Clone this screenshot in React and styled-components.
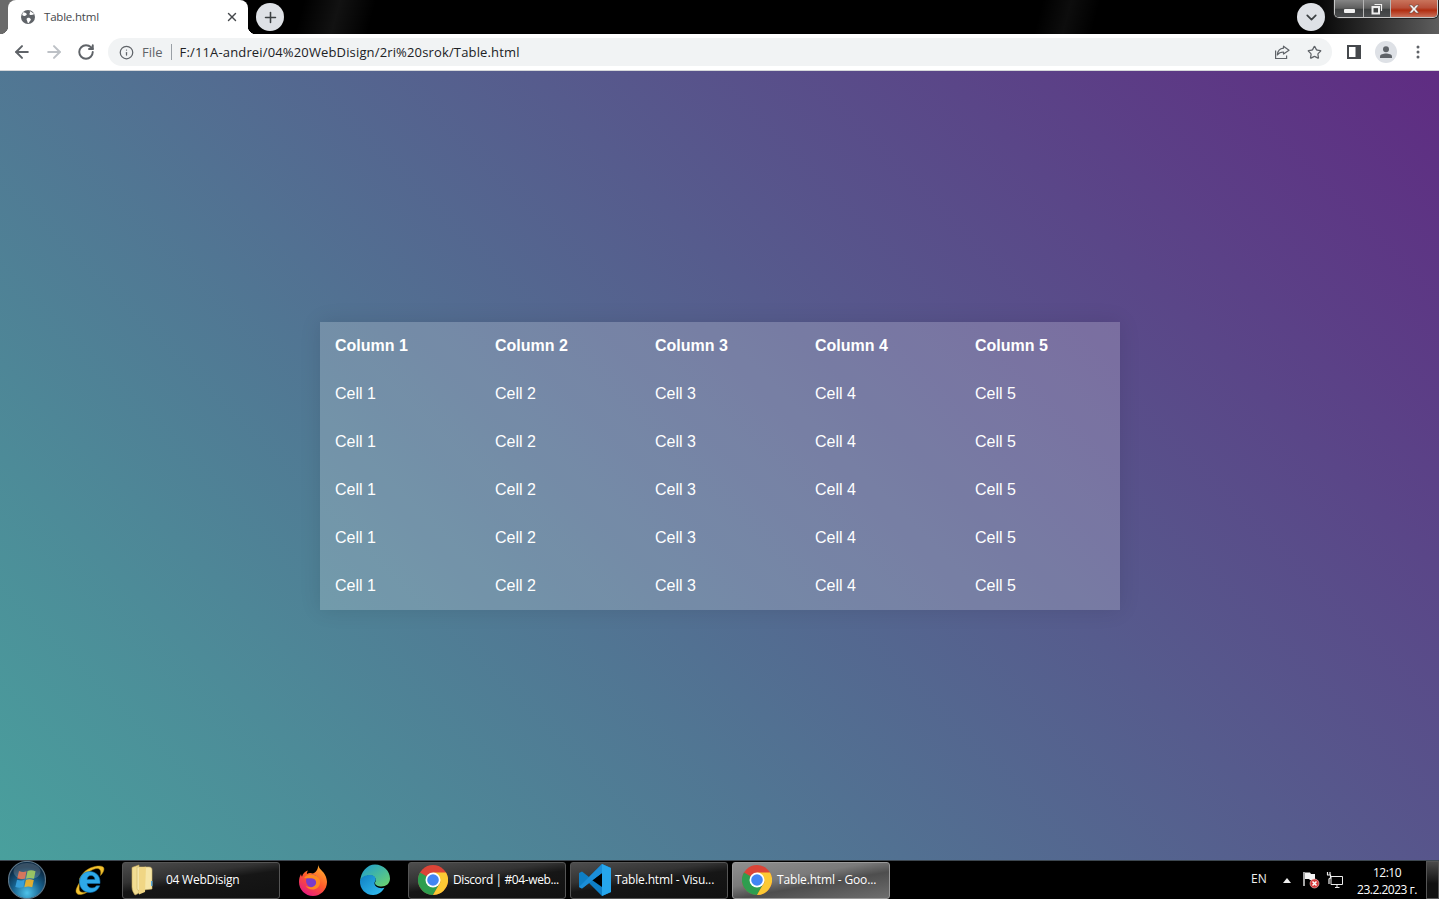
import React from 'react';
import styled, { createGlobalStyle } from 'styled-components';
import { ArrowLeft, ArrowRight, RotateCw, Info, Star, Plus, X, ChevronDown } from 'lucide-react';

const GlobalStyle = createGlobalStyle`
  html, body { margin: 0; padding: 0; height: 100%; overflow: hidden; }
  body { font-family: "Liberation Sans", Arial, sans-serif; }
`

const Screen = styled.div`
  width: 1439px;
  height: 899px;
  display: flex;
  flex-direction: column;
  overflow: hidden;
`

/* chrome title bar */
const TitleBar = styled.div`
  height: 34px;
  flex: none;
  display: flex;
  align-items: flex-start;
  padding-left: 8px;
  position: relative;
  background:
    linear-gradient(to right, #6a6a6a 16px, transparent 16px),
    linear-gradient(to right, transparent 91%, rgba(110,110,110,.85) 100%),
    linear-gradient(105deg, transparent 21%, rgba(255,255,255,.07) 23.500%, transparent 26%, transparent 72%, rgba(255,255,255,.05) 74%, transparent 76%),
    #000;
`
const Tab = styled.div`
  width: 240px;
  height: 34px;
  background: #fff;
  border-radius: 8px 8px 0 0;
  display: flex;
  align-items: center;
  padding: 0 9px 0 12px;
  box-sizing: border-box;
  position: relative;
  font: 11.5px "Open Sans", sans-serif;
  color: #45484c;
  &::before {
    content: '';
    position: absolute;
    left: -8px;
    top: 0;
    width: 8px;
    height: 34px;
    background:
      linear-gradient(#6a6a6a, #6a6a6a) top / 100% 26px no-repeat,
      radial-gradient(circle at 0 0, #6a6a6a 8px, #fff 8.500px) bottom / 100% 8px no-repeat;
  }
  &::after {
    content: '';
    position: absolute;
    left: 100%;
    bottom: 0;
    width: 8px;
    height: 8px;
    background: radial-gradient(circle at 100% 0, transparent 8px, #fff 8.500px);
  }
`
const TabTitle = styled.span`
  flex: 1;
  margin: 0 0 2px 8px;
  letter-spacing: -0.2px;
`
const TabClose = styled(X)`
  color: #45484c;
`
const NewTab = styled.div`
  width: 28px;
  height: 28px;
  margin: 3px 0 0 8px;
  border-radius: 50%;
  background: #dee1e6;
  color: #3c4043;
  display: flex;
  align-items: center;
  justify-content: center;
`
const TabSearch = styled(NewTab)`
  margin: 3px 0 0 auto;
`
const WindowControls = styled.div`
  width: 104px;
  height: 18px;
  margin: 0 1px 0 9px;
  display: flex;
  border: 1px solid #c8c8c8;
  border-top: 0;
  border-radius: 0 0 5px 5px;
  box-sizing: border-box;
  overflow: hidden;
  box-shadow: 0 0 0 1px #222;
`
const WinButton = styled.div`
  width: ${p => p.$w}px;
  flex: none;
  display: flex;
  align-items: center;
  justify-content: center;
  box-sizing: border-box;
  border-right: ${p => (p.$close ? '0' : '1px solid #b5b5b5')};
  background: ${p => (p.$close
    ? 'linear-gradient(#c9745c 0, #b8503a 45%, #b02d10 60%, #c9705a 100%)'
    : 'linear-gradient(#858585 0, #5e5e5e 48%, #3e4041 55%, #4c4e50 100%)')};
`
const MinGlyph = styled.div`
  width: 11px;
  height: 4px;
  margin-top: 5px;
  background: #f2f2f2;
  border-radius: 1px;
`

/* chrome toolbar */
const Toolbar = styled.div`
  height: 36px;
  flex: none;
  background: #fff;
  border-bottom: 1px solid #d5d7da;
  display: flex;
  align-items: center;
  padding: 0 5px 0 6px;
`
const NavButton = styled.div`
  width: 32px;
  height: 28px;
  flex: none;
  display: flex;
  align-items: center;
  justify-content: center;
  color: ${p => (p.$disabled ? '#bdc1c6' : '#5f6368')};
`
const Omnibox = styled.div`
  flex: 1;
  height: 28px;
  margin: 0 6px;
  border-radius: 14px;
  background: #f1f3f4;
  display: flex;
  align-items: center;
  padding: 0 2px 0 11px;
  font: 13px "Open Sans", sans-serif;
`
const SecureLabel = styled.span`
  color: #5f6368;
  margin-left: 8px;
`
const Divider = styled.div`
  width: 1px;
  height: 16px;
  background: #9aa0a6;
  margin: 0 8px;
`
const Url = styled.span`
  flex: 1;
  color: #202124;
  letter-spacing: 0.15px;
`
const OmniIcon = styled.div`
  width: 32px;
  display: flex;
  justify-content: center;
  color: #5f6368;
`
const Avatar = styled.div`
  width: 22px;
  height: 22px;
  border-radius: 50%;
  background: #dee1e6;
  display: flex;
  align-items: center;
  justify-content: center;
`

/* the page itself */
const Page = styled.main`
  flex: 1;
  min-height: 0;
  display: flex;
  align-items: center;
  justify-content: center;
  padding: 1px 0 0 1px;
  background: linear-gradient(45deg, #49a09d, #5f2c82);
`
const Table = styled.table`
  width: 800px;
  border-collapse: collapse;
  table-layout: fixed;
  overflow: hidden;
  box-shadow: 0 0 20px rgba(0,0,0,0.1);
`
const Th = styled.th`
  padding: 15px;
  line-height: 18px;
  font-size: 16px;
  text-align: left;
  color: #fff;
  background: rgba(255,255,255,0.2);
`
const Td = styled.td`
  padding: 15px;
  line-height: 18px;
  font-size: 16px;
  color: #fff;
  background: rgba(255,255,255,0.2);
`

/* windows taskbar */
const Taskbar = styled.div`
  height: 39px;
  flex: none;
  background: #000;
  border-top: 1px solid #3d4750;
  box-sizing: border-box;
  display: flex;
  align-items: center;
  color: #fff;
  font: 12px "Open Sans", sans-serif;
`
const StartSlot = styled.div`
  width: 58px;
  padding-left: 8px;
  box-sizing: border-box;
  flex: none;
  display: flex;
`
const Pinned = styled.div`
  width: 62px;
  flex: none;
  display: flex;
  justify-content: center;
`
const TaskButton = styled.div`
  width: 158px;
  height: 37px;
  margin: 0 2px;
  flex: none;
  box-sizing: border-box;
  display: flex;
  align-items: center;
  gap: ${p => p.$gap}px;
  padding-left: ${p => p.$pad}px;
  border: 1px solid ${p => (p.$active ? '#9a9a9a' : '#555')};
  border-radius: 3px;
  white-space: nowrap;
  letter-spacing: ${p => p.$spacing}px;
  background: ${p => (p.$active
    ? 'linear-gradient(170deg, #8f8f8f 0, #7a7a7a 38%, #4e4e4e 58%, #6e6e6e 100%)'
    : 'linear-gradient(172deg, #4d4d4d 0, #333 35%, #161616 52%, #111 100%)')};
`
const TaskLabel = styled.span`
  margin-bottom: 2px;
`
const Tray = styled.div`
  margin-left: auto;
  height: 100%;
  display: flex;
  align-items: center;
`
const Lang = styled.span`
  width: 16px;
  margin: -3px 8px 0 0;
  font-size: 12px;
  color: #f0f0f0;
`
const TrayIcon = styled.div`
  width: 24px;
  flex: none;
  display: flex;
  justify-content: center;
`
const Clock = styled.div`
  width: 64px;
  margin-left: 8px;
  padding-top: 1px;
  text-align: center;
  font-size: 12px;
  line-height: 17px;
  letter-spacing: -0.5px;
  white-space: nowrap;
`
const ShowDesktop = styled.div`
  width: 13px;
  height: 100%;
  margin-left: 7px;
  box-sizing: border-box;
  border: 1px solid #555;
  background: linear-gradient(#4a4a4a, #111 60%);
`

const Globe = () => (
  <svg width="16" height="16" viewBox="0 0 16 16">
    <circle cx="8" cy="8" r="7" fill="#5f6368" />
    <path d="M3 3.200c2 .2 3 .8 3.600 1.600.6 1-.6 1.600-1.400 2-.8.5-1.800.2-3-.8zM9 1.400c1.200.7 1.300 1.800.7 2.800-.6.8-.3 1.500.8 1.700 1 .2 2.500-.1 4-.9M7.500 9c1.500-.5 3 .3 3.300 1.300.3 1-.8 1.700-1.300 2.400-.4.800-.8 1.300-1.500 1.500-.6-1-.6-2-1-2.800-.5-.9-.7-1.900.5-2.400z" fill="#fff" />
  </svg>
)

const ShareIcon = () => (
  <svg width="16" height="16" viewBox="0 0 16 16" fill="none" stroke="#5f6368" strokeWidth="1.200">
    <path d="M1.600 6.500v8h11v-3" />
    <path d="M9.500 2.200 15 6.300 9.500 10V8c-2.800 0-4.700.8-6.200 3 .3-3.500 2.400-6.400 6.200-6.800z" strokeLinejoin="round" />
  </svg>
)

const SidePanel = () => (
  <svg width="14" height="14" viewBox="0 0 14 14">
    <path d="M0 0h14v14H0z" fill="#45484c" />
    <path d="M2 2h6.500v10H2z" fill="#fff" />
  </svg>
)

const Person = () => (
  <svg width="14" height="14" viewBox="0 0 14 14" fill="#5f6368">
    <circle cx="7" cy="4.200" r="3" />
    <path d="M1 13v-1.500C1 9.500 4.500 8.600 7 8.600s6 .9 6 2.900V13z" />
  </svg>
)

const Dots = () => (
  <svg width="4" height="14" viewBox="0 0 4 14" fill="#5f6368">
    <circle cx="2" cy="2" r="1.500" />
    <circle cx="2" cy="7" r="1.500" />
    <circle cx="2" cy="12" r="1.500" />
  </svg>
)

const RestoreGlyph = () => (
  <svg width="12" height="12" viewBox="0 0 12 12" fill="none" stroke="#eee">
    <path d="M3.500 1.500h7v6.500" strokeWidth="1.200" />
    <path d="M1.500 4h6.500v6.500H1.500z" strokeWidth="2" />
  </svg>
)

const CloseGlyph = () => (
  <svg width="14" height="10" viewBox="0 0 14 10">
    <path d="M2 1h3l2 2.400L9 1h3L8.600 5 12 9H9L7 6.600 5 9H2l3.400-4z" fill="#f4f4f4" stroke="#6a4a44" strokeWidth=".6" />
  </svg>
)

const StartOrb = () => (
  <svg width="38" height="38" viewBox="0 0 38 38">
    <defs>
      <radialGradient id="orb" cx="50%" cy="85%" r="70%">
        <stop offset="0" stopColor="#4fc3ea" />
        <stop offset=".55" stopColor="#17628f" />
        <stop offset="1" stopColor="#0b2a44" />
      </radialGradient>
    </defs>
    <circle cx="19" cy="19" r="18.500" fill="url(#orb)" stroke="#5b7486" strokeWidth="1.200" />
    <g opacity=".9">
      <path d="M11 10c3 1.300 5 1.300 7.500.3L17 17.500c-2.800 1-5 1-7.800 0z" fill="#e05a35" />
      <path d="M19.500 10c2.500-1 5-1 8 .2L26 17.700c-3-1-5.500-1-8 0z" fill="#8fc23f" />
      <path d="M9 18.800c3 1 5.300 1 7.800 0L15.300 26c-2.700 1-5 1-8 0z" fill="#3aa4e0" />
      <path d="M17.800 19c2.700-1 5-1 8 0l-1.600 7.300c-3-1-5.200-1-7.800 0z" fill="#f5b324" />
    </g>
    <ellipse cx="19" cy="10.500" rx="13.500" ry="8.500" fill="#fff" opacity=".18" />
  </svg>
)

const IeLogo = () => (
  <svg width="32" height="32" viewBox="0 0 32 32">
    <path d="M7 14c3-6 8-10 15-11.500C27 1.500 31 2 31 5c0 2-1.500 4.500-3.500 6.500C28.500 6.500 27 4 23 4.500 15 6 7 16 3.500 24.500 2 28.500 4 31 8 30.500c2.500-.3 5-1.500 7-3-3.500 1-7 1.500-8.300-.5-1.200-2 0-7.500 0-13z" fill="#f2c230" stroke="#b98a10" strokeWidth=".5" />
    <path d="M16.800 7.500c5.700 0 10.200 4.200 10.200 10v2H14c.2 3 2.500 4.500 5 4.500 2 0 3.500-.8 4.500-2.200h3.200C25 26 21.500 28.500 17 28.500c-6 0-10.500-4.500-10.500-10.500S11 7.500 16.800 7.500zM14 15.500h8c-.2-2.500-2-4-4-4s-3.700 1.500-4 4z" fill="#2ea9e8" fillRule="evenodd" stroke="#0e6eb0" strokeWidth=".6" />
  </svg>
)

const FolderIcon = () => (
  <svg width="24" height="32" viewBox="0 0 24 32">
    <path d="M1 3.500 8 1v28l-4 2C2.500 29 1 26 1 23z" fill="#f2dd92" stroke="#c9ad5c" strokeWidth=".6" />
    <path d="M6 3h12c2 0 3 1 3 3v19l-13 1.500c-1.500 0-2-1-2-3z" fill="#f6e6a8" stroke="#cdb56a" strokeWidth=".6" />
    <path d="M8 3.500 15 2.800 14 28l-6 2.500z" fill="#f0d684" />
    <rect x="20" y="17" width="1.500" height="5" fill="#5aa8d8" />
  </svg>
)

const FirefoxLogo = () => (
  <svg width="32" height="32" viewBox="0 0 32 32">
    <defs>
      <linearGradient id="ff" x1=".8" y1="0" x2=".2" y2="1">
        <stop offset="0" stopColor="#ffb52e" />
        <stop offset=".5" stopColor="#ff5a2b" />
        <stop offset="1" stopColor="#e31587" />
      </linearGradient>
    </defs>
    <path d="M21 0c.5 4 3 5.500 5.500 8.500 3 4 3.500 8 3.500 9.500 0 7.700-6.300 14-14 14S2 25.700 2 18c0-3 .6-5.500 2-8 0 1 .5 2 1 2.800C6 9 8.500 7 11 6.500c-1 1.500-1.300 2.500-1 3.500 2-1.500 4-1.300 6-.5C20.500 7.500 21.500 3.500 21 0z" fill="url(#ff)" />
    <circle cx="15.500" cy="17" r="6.500" fill="#7b3cc9" />
    <path d="M7 14c3-3.500 7-4 10-3 4 1 6.500 4 6 8-.4 4-3.500 6.500-7.500 6.500-3 0-5.500-1.500-7-4 2 1.500 5 2.300 7.500 1.200 2.500-1 3.500-3.300 3-5.200-.7-2.500-3-3.500-5.500-3.300-2 .1-4.500 0-6.500-.2z" fill="#ff8a1f" />
  </svg>
)

const EdgeLogo = () => (
  <svg width="32" height="32" viewBox="0 0 32 32">
    <defs>
      <linearGradient id="edgeA" x1="0" y1="0" x2="1" y2="1">
        <stop offset="0" stopColor="#0f7fc4" />
        <stop offset="1" stopColor="#35c1f1" />
      </linearGradient>
      <linearGradient id="edgeB" x1="0" y1="0" x2="1" y2="1">
        <stop offset="0" stopColor="#1a9ad6" />
        <stop offset="1" stopColor="#6fd66a" />
      </linearGradient>
    </defs>
    <path d="M16 .5C24.500.5 31 7 31 14.500c0 5-4 8-8.500 8-3.500 0-6.500-1.300-6.500-3.500 0-1 .8-1.300.8-3 0-2.500-2.500-4.500-5.300-4.500C6 11.500 2 14 1 18 1.500 8 8 .5 16 .5z" fill="url(#edgeB)" />
    <path d="M1 17c1-4 5-6 10-6 3.500 0 5.800 2 5.800 4.500 0 1.500-1.300 2-1.300 3.800 0 3.500 4.500 5.700 10 4.500-2.500 4.500-6.500 7.200-11 7.200C7 31.500 .5 25 1 17z" fill="url(#edgeA)" />
  </svg>
)

const ChromeLogo = () => (
  <svg width="30" height="30" viewBox="0 0 30 30">
    <circle cx="15" cy="15" r="15" fill="#db4437" />
    <path d="M15 15 2 7.500A15 15 0 0 0 15 30l7.500-13z" fill="#2e9e4f" />
    <path d="M15 7.500h13A15 15 0 0 1 15 30l7.500-13z" fill="#fcc934" />
    <circle cx="15" cy="15" r="7.500" fill="#fff" />
    <circle cx="15" cy="15" r="5.800" fill="#4285f4" />
  </svg>
)

const VsCodeLogo = () => (
  <svg width="34" height="34" viewBox="0 0 34 34">
    <path d="M24 1 33 5v24l-9 4L11 20l-7 5.500L1 24V10l3-1.500 7 5.500z" fill="#0e7fc6" />
    <path d="M24 1 33 5v24l-9 4z" fill="#26a6ec" />
    <path d="M24 10 14 17l10 7z" fill="#000" />
    <path d="M24 1v9L4 25.500 1 24z" fill="#1b8ed8" />
  </svg>
)

const FlagIcon = () => (
  <svg width="18" height="18" viewBox="0 0 18 18">
    <path d="M2 1v14" stroke="#ddd" strokeWidth="1.500" />
    <path d="M3 1.500h5l1 1.500h4v6H8L7 8H3z" fill="#f4f4f4" />
    <circle cx="12.500" cy="12.500" r="4.500" fill="#d83a3a" stroke="#f2c4c4" strokeWidth=".6" />
    <path d="m10.500 10.500 4 4m0-4-4 4" stroke="#fff" strokeWidth="1.500" />
  </svg>
)

const NetworkIcon = () => (
  <svg width="18" height="18" viewBox="0 0 18 18" fill="none" stroke="#eee">
    <path d="M5 5.500h11.500v8H5z" />
    <path d="M9 16.500h4.500M11 13.500v3" />
    <path d="M1.500 1v3M4 1v3M1 4h3.500v3L3 8v5" strokeWidth="1.200" />
  </svg>
)

const TrayArrow = () => (
  <svg width="8" height="5" viewBox="0 0 8 5">
    <path d="M4 0 8 5H0z" fill="#eee" />
  </svg>
)

const columns = ['Column 1', 'Column 2', 'Column 3', 'Column 4', 'Column 5'];
const cells = ['Cell 1', 'Cell 2', 'Cell 3', 'Cell 4', 'Cell 5'];
const rows = [0, 1, 2, 3, 4];

const App = () => (
  <Screen>
    <GlobalStyle />
    <TitleBar>
      <Tab>
        <Globe />
        <TabTitle>Table.html</TabTitle>
        <TabClose size={14} strokeWidth={2.4} />
      </Tab>
      <NewTab><Plus size={17} strokeWidth={2.2} /></NewTab>
      <TabSearch><ChevronDown size={17} strokeWidth={2.4} /></TabSearch>
      <WindowControls>
        <WinButton $w={29}><MinGlyph /></WinButton>
        <WinButton $w={27}><RestoreGlyph /></WinButton>
        <WinButton $w={46} $close><CloseGlyph /></WinButton>
      </WindowControls>
    </TitleBar>

    <Toolbar>
      <NavButton><ArrowLeft size={20} strokeWidth={2.400} /></NavButton>
      <NavButton $disabled><ArrowRight size={20} strokeWidth={2.400} /></NavButton>
      <NavButton><RotateCw size={18} strokeWidth={2.600} /></NavButton>
      <Omnibox>
        <Info size={15} color="#5f6368" strokeWidth={2} />
        <SecureLabel>File</SecureLabel>
        <Divider />
        <Url>F:/11A-andrei/04%20WebDisign/2ri%20srok/Table.html</Url>
        <OmniIcon><ShareIcon /></OmniIcon>
        <OmniIcon><Star size={15} strokeWidth={2} /></OmniIcon>
      </Omnibox>
      <NavButton><SidePanel /></NavButton>
      <NavButton><Avatar><Person /></Avatar></NavButton>
      <NavButton><Dots /></NavButton>
    </Toolbar>

    <Page>
      <Table>
        <thead>
          <tr>{columns.map(c => <Th key={c}>{c}</Th>)}</tr>
        </thead>
        <tbody>
          {rows.map(r => (
            <tr key={r}>{cells.map(c => <Td key={c}>{c}</Td>)}</tr>
          ))}
        </tbody>
      </Table>
    </Page>

    <Taskbar>
      <StartSlot><StartOrb /></StartSlot>
      <Pinned><IeLogo /></Pinned>
      <TaskButton $pad={8} $gap={11} $spacing={-0.25}><FolderIcon /><TaskLabel>04 WebDisign</TaskLabel></TaskButton>
      <Pinned><FirefoxLogo /></Pinned>
      <Pinned><EdgeLogo /></Pinned>
      <TaskButton $pad={9} $gap={5} $spacing={-0.4}><ChromeLogo /><TaskLabel>Discord | #04-web...</TaskLabel></TaskButton>
      <TaskButton $pad={7} $gap={3} $spacing={-0.15}><VsCodeLogo /><TaskLabel>Table.html - Visu...</TaskLabel></TaskButton>
      <TaskButton $pad={9} $gap={5} $spacing={-0.15} $active><ChromeLogo /><TaskLabel>Table.html - Goo...</TaskLabel></TaskButton>
      <Tray>
        <Lang>EN</Lang>
        <TrayIcon><TrayArrow /></TrayIcon>
        <TrayIcon><FlagIcon /></TrayIcon>
        <TrayIcon><NetworkIcon /></TrayIcon>
        <Clock>12:10<br />23.2.2023 г.</Clock>
        <ShowDesktop />
      </Tray>
    </Taskbar>
  </Screen>
);

export default App;
